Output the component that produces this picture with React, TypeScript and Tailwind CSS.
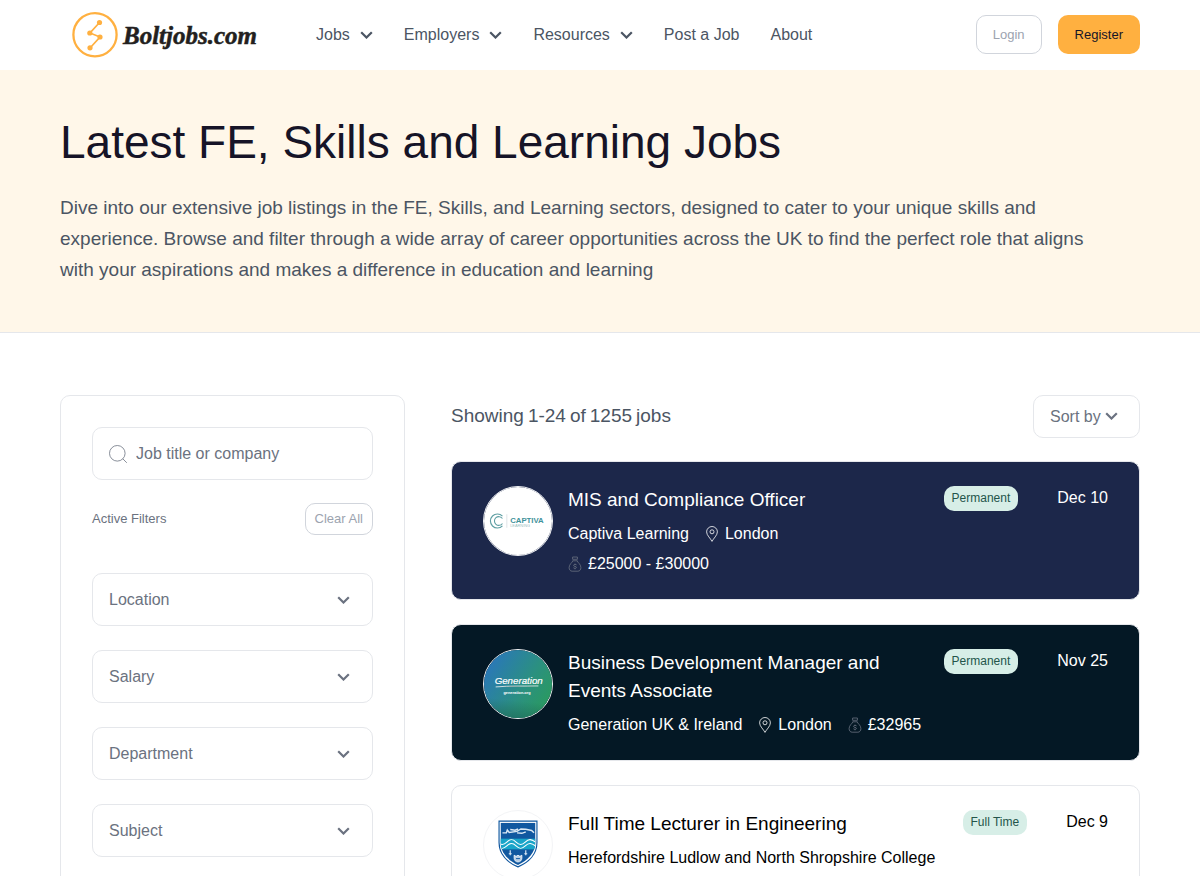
import React from "react";
import cn from "clsx";

interface Job {
  id: string;
  title: string;
  company: string;
  location?: string;
  salary?: string;
  contract: string;
  date: string;
  cardClassName: string;
  logo: React.ReactNode;
}

interface IconProps {
  className?: string;
}

const Chevron: React.FC<IconProps> = ({ className }) => (
  <svg
    className={cn("h-2 w-[13px] shrink-0", className)}
    viewBox="0 0 13 8"
    fill="none"
    stroke="currentColor"
    strokeWidth="2.2"
    aria-hidden="true"
  >
    <path d="M1.2 1.2 6.5 6.5l5.3-5.3" />
  </svg>
);

const SearchIcon: React.FC<IconProps> = ({ className }) => (
  <svg
    className={className}
    viewBox="1 0 20 20"
    fill="none"
    stroke="currentColor"
    strokeWidth="0.8"
    aria-hidden="true"
  >
    <circle cx="9.3" cy="9.3" r="7.8" />
    <path d="m14.8 14.8 4 4" />
  </svg>
);

const PinIcon: React.FC = () => (
  <svg
    className="h-4 w-3.5 shrink-0"
    viewBox="0 0 14 16"
    fill="none"
    stroke="currentColor"
    strokeWidth="0.8"
    aria-hidden="true"
  >
    <path d="M7 15.4C5.7 12.6 1.6 9.3 1.6 5.9a5.4 5.4 0 0 1 10.8 0c0 3.4-4.1 6.7-5.4 9.5Z" />
    <circle cx="7" cy="5.8" r="2" />
  </svg>
);

const MoneyBagIcon: React.FC = () => (
  <svg
    className="h-4 w-3.5 shrink-0 text-gray-500"
    viewBox="0 0 14 16"
    fill="none"
    stroke="currentColor"
    strokeWidth="0.8"
    aria-hidden="true"
  >
    <path d="M4.6 1h4.8v2.3H4.6zM4.6 4.8h4.8" />
    <path d="M4.9 4.8C4.3 6.6 1.1 8.2 1.1 11.6c0 2.1 1.2 3.6 3 3.6h5.8c1.8 0 3-1.5 3-3.6 0-3.4-3.2-5-3.8-6.8" />
    <path d="M8.6 8.9c-.4-.6-3.1-.8-3.1.5s3 .7 3 2-2.8 1.1-3.1.3M7 7.6v.8M7 12.3v1" />
  </svg>
);

const BrandLogo: React.FC = () => (
  <svg
    className="h-[46px] w-[184px] overflow-visible"
    viewBox="0 0 184 46"
    role="img"
    aria-label="Boltjobs.com"
  >
    <g stroke="#ffb040" fill="none">
      <circle cx="23" cy="22.7" r="21.6" strokeWidth="2.3" />
      <path d="m27.5 10.500-9.500 10.500 10 4-10 11" strokeWidth="1.7" />
    </g>
    <g fill="#ffb040">
      <circle cx="27.5" cy="10.5" r="2.6" />
      <circle cx="17.8" cy="21" r="2.6" />
      <circle cx="28" cy="25" r="2.6" />
      <circle cx="18" cy="35.8" r="2.6" />
    </g>
    <text
      x="51"
      y="32"
      className="fill-[#231f20] stroke-[#231f20] font-['Liberation_Serif',serif] text-[25px] font-bold italic"
      strokeWidth="0.5"
    >
      Boltjobs.com
    </text>
  </svg>
);

const CaptivaLogo: React.FC = () => (
  <svg viewBox="0 0 70 70" aria-hidden="true">
    <rect width="70" height="70" fill="#fff" />
    <g fill="none" stroke="#5f9fa3">
      <path d="M19 30a7.200 7.200 0 1 0 0 10" strokeWidth="1.2" />
      <path d="M19 32.500a4.500 4.500 0 1 0 0 5" strokeWidth="1.1" />
      <path d="M23.500 28v14" stroke="#d7dde0" strokeWidth="0.8" />
    </g>
    <text
      x="27"
      y="37"
      className="fill-[#3f929b] font-['Liberation_Sans',sans-serif] text-[8px] font-bold"
    >
      CAPTIVA
    </text>
    <text
      x="27"
      y="41"
      className="fill-[#9dbfc3] font-['Liberation_Sans',sans-serif] text-[4px]"
    >
      LEARNING
    </text>
  </svg>
);

const GenerationLogo: React.FC = () => (
  <svg viewBox="0 0 70 70" aria-hidden="true">
    <defs>
      <linearGradient id="generation" x1="0" y1="0.2" x2="1" y2="0.8">
        <stop offset="0.05" stopColor="#2a78b8" />
        <stop offset="0.6" stopColor="#2b9080" />
        <stop offset="1" stopColor="#2a9b5c" />
      </linearGradient>
      <linearGradient id="generationShade" x1="0.1" y1="0" x2="0" y2="1">
        <stop offset="0.7" stopColor="#1f6a5c" stopOpacity="0" />
        <stop offset="1" stopColor="#1f6a5c" stopOpacity="0.8" />
      </linearGradient>
    </defs>
    <rect width="70" height="70" fill="url(#generation)" />
    <rect width="70" height="70" fill="url(#generationShade)" />
    <text
      x="11"
      y="35"
      className="fill-white stroke-white font-['Liberation_Sans',sans-serif] text-[10px] italic"
      strokeWidth="0.2"
    >
      Generation
    </text>
    <path d="M12 38c14-1.300 30-.6 44-1" stroke="#fff" strokeWidth="0.8" />
    <text
      x="34"
      y="45"
      className="fill-white font-['Liberation_Sans',sans-serif] text-[4px] font-bold"
      textAnchor="middle"
    >
      generation.org
    </text>
  </svg>
);

const CollegeLogo: React.FC = () => (
  <svg viewBox="0 0 70 70" aria-hidden="true">
    <defs>
      <clipPath id="shield">
        <path d="M17 12h36v20c0 11-8 19-18 23.500C25 51 17 43 17 32Z" />
      </clipPath>
    </defs>
    <path
      d="M15.500 10.500h39v22c0 12-8.500 20.500-19.500 25C24 53 15.500 44.500 15.500 32.500Z"
      fill="#fff"
      stroke="#1158a0"
      strokeWidth="1.2"
    />
    <g clipPath="url(#shield)">
      <rect x="15" y="10" width="40" height="48" fill="#1158a0" />
      <rect x="15" y="28.500" width="40" height="11" fill="#19a5c9" />
      <g fill="none" stroke="#fff" strokeWidth="1.1">
        <path d="M14 32c3.500 3.500 6 3.500 9.500 0s6-3.500 9.500 0 6 3.500 9.500 0 6-3.500 12 1" />
        <path d="M14 36c3.500 3.500 6 3.500 9.500 0s6-3.500 9.500 0 6 3.500 9.500 0 6-3.500 12 1" />
      </g>
    </g>
    <path
      d="M19 22.500h4l1-3 2 2.500 8-1 4-2.500 5 .3 6 1.200 2.500 2.500M27 19l5 .8 3-1.300M34 22.500l5 .5 4-1.500"
      fill="none"
      stroke="#dce9f5"
      strokeWidth="1.5"
    />
    <path
      d="M27 40.500v5m-1.500-1.500h3M43 40.500v5M41.500 44h3"
      stroke="#dce9f5"
      strokeWidth="1.2"
    />
    <path
      d="m31 45.500 2 1.200 2-1.200 2 1.200 2-1.200v3c0 2-1.500 4-4 4s-4-2-4-4Z"
      fill="#b9cfe6"
      stroke="#fff"
      strokeWidth="0.8"
    />
    <path d="M33 49h4" stroke="#1158a0" />
  </svg>
);

const jobs: Job[] = [
  {
    id: "mis-compliance-officer",
    title: "MIS and Compliance Officer",
    company: "Captiva Learning",
    location: "London",
    salary: "£25000 - £30000",
    contract: "Permanent",
    date: "Dec 10",
    cardClassName: "bg-[#1c274a] text-white",
    logo: <CaptivaLogo />,
  },
  {
    id: "business-development-manager",
    title: "Business Development Manager and Events Associate",
    company: "Generation UK & Ireland",
    location: "London",
    salary: "£32965",
    contract: "Permanent",
    date: "Nov 25",
    cardClassName: "bg-[#041825] text-white",
    logo: <GenerationLogo />,
  },
  {
    id: "lecturer-engineering",
    title: "Full Time Lecturer in Engineering",
    company: "Herefordshire Ludlow and North Shropshire College",
    contract: "Full Time",
    date: "Dec 9",
    cardClassName: "bg-white text-black",
    logo: <CollegeLogo />,
  },
];

const filters = ["Location", "Salary", "Department", "Subject"];

const navMenus = ["Jobs", "Employers", "Resources"];

const Header: React.FC = () => (
  <header className="flex h-[70px] items-center px-[60px]">
    <a href="#home" className="ml-3 shrink-0">
      <BrandLogo />
    </a>
    <nav className="ml-[60px] flex items-center gap-[31px] text-base text-[#4b5563]">
      {navMenus.map((menu) => (
        <button
          key={menu}
          type="button"
          className="flex items-center gap-2.5"
          aria-haspopup="menu"
        >
          {menu}
          <Chevron />
        </button>
      ))}
      <a href="#post-a-job">Post a Job</a>
      <a href="#about">About</a>
    </nav>
    <div className="mb-px ml-auto flex gap-4 text-[13px]">
      <button
        type="button"
        className="h-[39px] rounded-[10px] border border-gray-300 px-4 text-[#9ca3af]"
      >
        Login
      </button>
      <button
        type="button"
        className="h-[39px] rounded-[10px] bg-[#ffb040] px-[17px] text-[#161427]"
      >
        Register
      </button>
    </div>
  </header>
);

const Hero: React.FC = () => (
  <section className="border-b border-gray-200 bg-[#fff7e9] px-[60px] pt-12 pb-[47px]">
    <h1 className="text-[46px] leading-[48px] text-[#161427]">
      Latest FE, Skills and Learning Jobs
    </h1>
    <p className="mt-[26px] max-w-[1060px] text-[19px] leading-[31px] text-[#4b5563]">
      Dive into our extensive job listings in the FE, Skills, and Learning
      sectors, designed to cater to your unique skills and experience. Browse
      and filter through a wide array of career opportunities across the UK to
      find the perfect role that aligns with your aspirations and makes a
      difference in education and learning
    </p>
  </section>
);

const FilterSelect: React.FC<{ label: string }> = ({ label }) => (
  <div className="relative">
    <select
      aria-label={label}
      className="h-[53px] w-full appearance-none rounded-[10px] border border-gray-200 bg-white px-4 text-base text-[#6b7280]"
    >
      <option>{label}</option>
    </select>
    <Chevron className="pointer-events-none absolute top-[23px] right-[23px] text-[#6b7280]" />
  </div>
);

const Sidebar: React.FC = () => (
  <aside className="w-[345px] shrink-0 rounded-[10px] border border-gray-200 p-[31px]">
    <label className="flex h-[53px] items-center gap-[7px] rounded-[10px] border border-gray-200 px-4">
      <SearchIcon className="size-5 shrink-0 text-[#6b7280]" />
      <input
        type="search"
        aria-label="Job title or company"
        placeholder="Job title or company"
        className="w-full min-w-0 text-base text-[#6b7280] outline-none placeholder:text-[#6b7280]"
      />
    </label>
    <div className="mt-[23px] flex items-center justify-between text-[13px]">
      <span className="text-[#6b7280]">Active Filters</span>
      <button
        type="button"
        className="h-8 rounded-[10px] border border-gray-300 px-[9px] text-[#9ca3af]"
      >
        Clear All
      </button>
    </div>
    <div className="mt-[38px] flex flex-col gap-6">
      {filters.map((label) => (
        <FilterSelect key={label} label={label} />
      ))}
    </div>
  </aside>
);

const JobCard: React.FC<{ job: Job }> = ({ job }) => (
  <article
    className={cn(
      "flex items-start rounded-[10px] border border-gray-200 px-[31px] pt-6 pb-[23px]",
      job.cardClassName
    )}
  >
    <div className="size-[70px] shrink-0 overflow-hidden rounded-full border border-gray-100">
      {job.logo}
    </div>
    <div className="ml-[15px] min-w-0 flex-1">
      <h2 className="text-[19px] leading-7">
        <a href={`#${job.id}`}>{job.title}</a>
      </h2>
      <div className="mt-2 flex flex-wrap gap-x-4 gap-y-1.5 text-base leading-6">
        <span>{job.company}</span>
        {job.location && (
          <span className="flex items-center gap-1.5">
            <PinIcon />
            {job.location}
          </span>
        )}
        {job.salary && (
          <span className="flex items-center gap-1.5">
            <MoneyBagIcon />
            {job.salary}
          </span>
        )}
      </div>
    </div>
    <span className="ml-4 rounded-[10px] bg-[#d7eee7] px-2 text-xs leading-[25px] text-[#23554a]">
      {job.contract}
    </span>
    <time className="ml-[39px] text-base leading-6">{job.date}</time>
  </article>
);

const App: React.FC = () => (
  <div className="bg-white font-['Liberation_Sans',Arial,sans-serif]">
    <Header />
    <Hero />
    <main className="flex items-start gap-[46px] px-[60px] pt-[62px]">
      <Sidebar />
      <section className="min-w-0 flex-1">
        <div className="flex items-center justify-between">
          <p className="flex gap-1 text-[19px] text-[#4b5563]">
            <span>Showing</span>
            <span>1-24</span>
            <span>of</span>
            <span>1255</span>
            <span>jobs</span>
          </p>
          <div className="relative">
            <select
              aria-label="Sort by"
              className="h-[43px] w-[107px] appearance-none rounded-[10px] border border-gray-200 bg-white pl-4 text-base text-[#6b7280]"
            >
              <option>Sort by</option>
            </select>
            <Chevron className="pointer-events-none absolute top-[17px] right-[22px] text-[#6b7280]" />
          </div>
        </div>
        <div className="mt-[23px] flex flex-col gap-6">
          {jobs.map((job) => (
            <JobCard key={job.id} job={job} />
          ))}
        </div>
      </section>
    </main>
  </div>
);

export default App;
